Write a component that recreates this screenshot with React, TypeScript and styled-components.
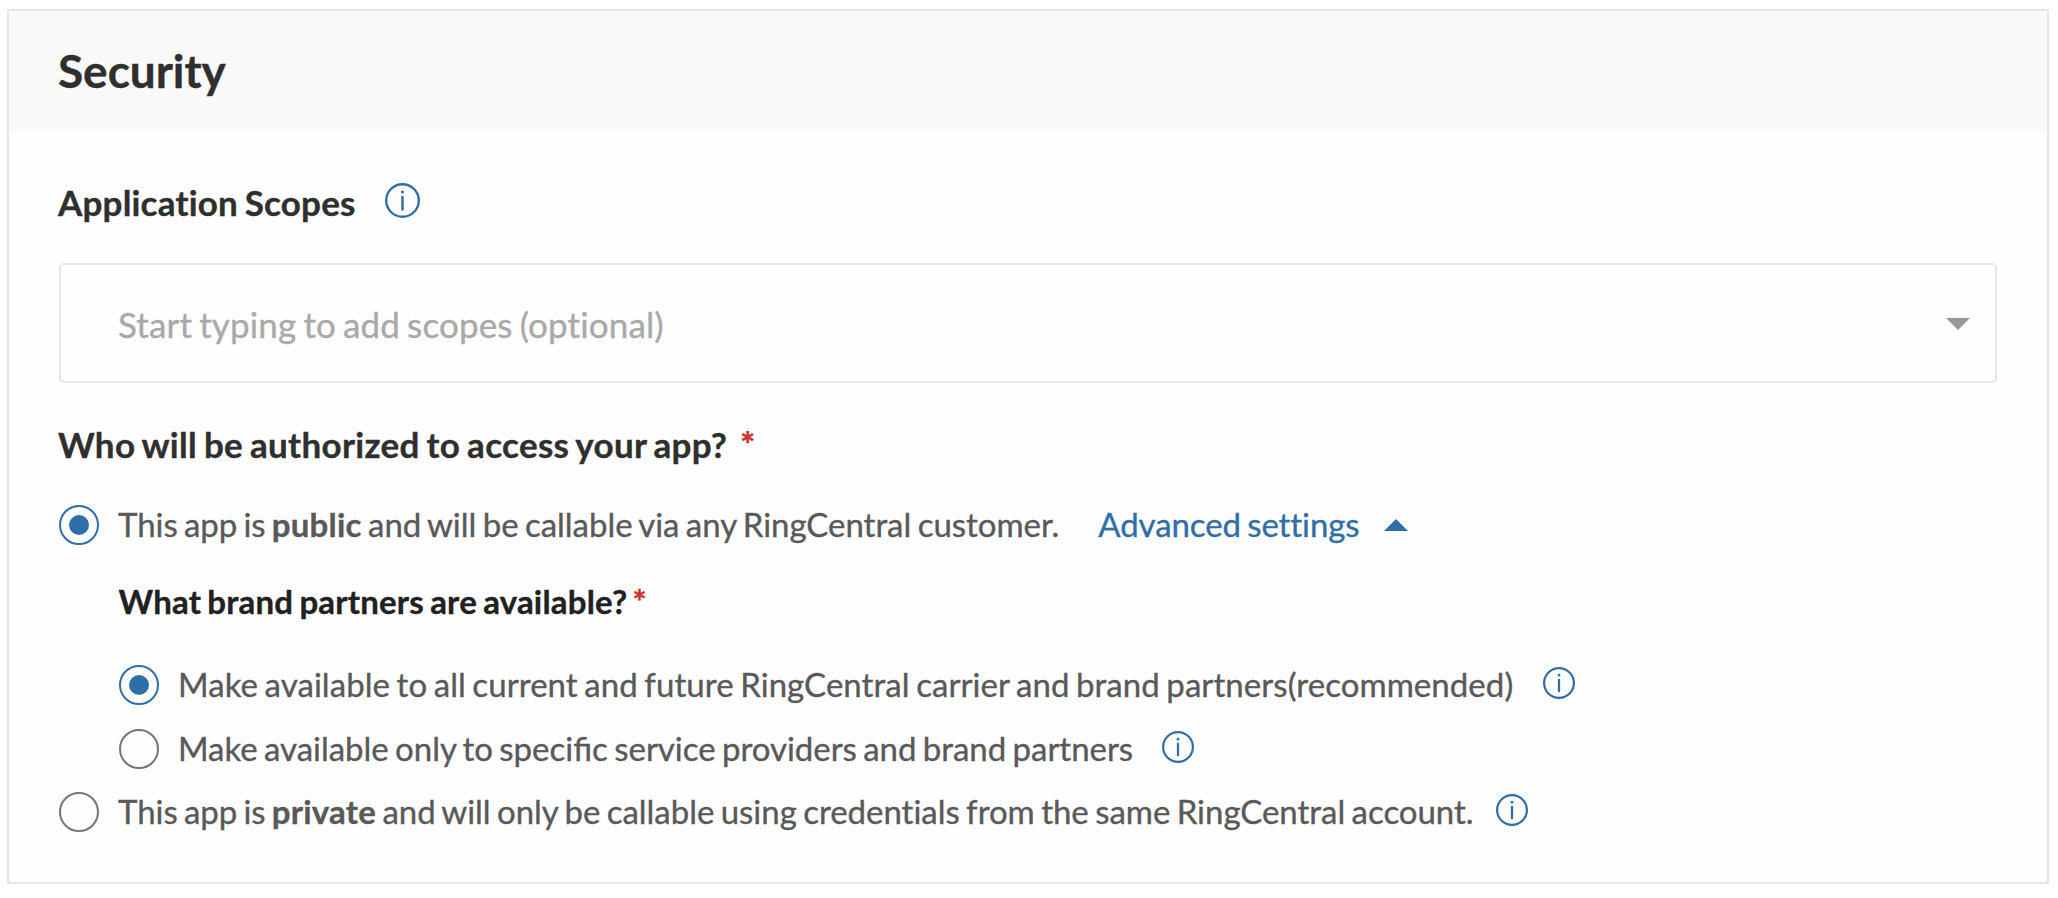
import React, { useState } from "react";
import styled, { createGlobalStyle } from "styled-components";

const blue = "#2f6ea9";
const line = "#e6e6e6";

const GlobalStyle = createGlobalStyle`
  * { box-sizing: border-box; }
  body {
    margin: 0;
    background: #fff;
    font-family: Lato, "Liberation Sans", sans-serif;
    font-variant-ligatures: none;
    -webkit-font-smoothing: antialiased;
    -webkit-text-stroke: 0.35px currentColor;
  }
`;

const Page = styled.main`
  padding: 9px 9px 14px 7px;
`;

const Panel = styled.section`
  height: 875px;
  border: 2px solid ${line};
  background: #fefefe;
`;

const PanelHeader = styled.header`
  height: 120px;
  padding: 0 49px;
  background: #f9f9f9;
`;

const Title = styled.h1`
  margin: 0;
  font-size: 46px;
  font-weight: 700;
  line-height: 119px;
  letter-spacing: -0.05px;
  color: #2f2f2f;
`;

const PanelBody = styled.div`
  display: flex;
  flex-direction: column;
  padding: 41px 50px 0;
`;

const Heading = styled.div<{ $nested?: boolean; $tracking: number }>`
  display: flex;
  align-items: center;
  height: ${(p) => (p.$nested ? "50px" : "60px")};
  margin: 0 0 ${(p) => (p.$nested ? "27px" : "0")} ${(p) => (p.$nested ? "-0.5px" : "-1px")};
  font-size: ${(p) => (p.$nested ? "33px" : "35px")};
  font-weight: 700;
  line-height: ${(p) => (p.$nested ? "50px" : "60px")};
  letter-spacing: ${(p) => p.$tracking}px;
  word-spacing: -2px;
  white-space: pre;
  color: ${(p) => (p.$nested ? "#212121" : "#2f2f2f")};
`;

const Required = styled.span<{ $gap: number }>`
  margin-left: ${(p) => p.$gap}px;
  padding-bottom: 2px;
  font-weight: 900;
  color: #c93430;
`;

const ScopeSelect = styled.div`
  display: flex;
  align-items: center;
  justify-content: space-between;
  height: 120px;
  margin: 31px 0;
  padding: 0 25px 0 57px;
  border: 2px solid ${line};
  border-radius: 5px;
`;

const Placeholder = styled.span`
  padding-top: 1px;
  font-size: 35px;
  line-height: 50px;
  letter-spacing: 0.13px;
  word-spacing: -2px;
  color: #a9a9a9;
`;

const Caret = styled.svg`
  display: block;
  width: 24px;
  height: 12px;
  margin-top: 2px;
`;

const Option = styled.label<{ $gap: number; $height?: number }>`
  display: flex;
  align-items: center;
  gap: ${(p) => p.$gap}px;
  height: ${(p) => p.$height ?? 64}px;
  cursor: pointer;
`;

const OptionRow = styled.div`
  display: flex;
  align-items: center;
`;

const HiddenInput = styled.input`
  position: absolute;
  opacity: 0;
  pointer-events: none;
`;

const RadioMark = styled.span<{ $on: boolean }>`
  display: grid;
  place-items: center;
  width: 40px;
  height: 40px;
  border: 2px solid ${(p) => (p.$on ? blue : "#767676")};
  border-radius: 50%;

  &::after {
    content: "";
    width: 20px;
    height: 20px;
    border-radius: 50%;
    background: ${(p) => (p.$on ? blue : "transparent")};
  }
`;

const OptionText = styled.span<{ $tracking?: number }>`
  padding-bottom: 2px;
  font-size: 33px;
  line-height: 60px;
  letter-spacing: ${(p) => (p.$tracking ? `${p.$tracking}px` : "normal")};
  word-spacing: -2px;
  white-space: pre;
  color: #595959;
`;

const Lead = styled.span`
  word-spacing: -2.2px;
`;

const Strong = styled.b`
  letter-spacing: 0.2px;
`;

const Ligated = styled.span`
  font-variant-ligatures: common-ligatures;
  letter-spacing: normal;
`;

const Nested = styled.div`
  padding-left: 60px;
`;

const AdvancedToggle = styled.button`
  display: flex;
  align-items: center;
  gap: 25px;
  margin: 0 0 0 39px;
  padding: 0 0 2px;
  border: 0;
  background: none;
  font: 400 33px/60px Lato, "Liberation Sans", sans-serif;
  font-variant-ligatures: none;
  letter-spacing: -0.1px;
  word-spacing: -2px;
  color: ${blue};
  cursor: pointer;
`;

const InfoSvg = styled.svg<{ $size: number; $gap: number }>`
  display: block;
  width: ${(p) => p.$size}px;
  height: ${(p) => p.$size}px;
  margin: 0 0 4px ${(p) => p.$gap}px;
`;

function Info({ size = 32, gap }: { size?: number; gap: number }) {
  return (
    <InfoSvg $size={size} $gap={gap} viewBox="0 0 35 35" fill="none" stroke={blue}>
      <circle cx="17.5" cy="17.5" r="16.3" strokeWidth="2.4" />
      <circle cx="17.5" cy="9" r="1.5" fill={blue} stroke="none" />
      <path d="M17.5 14v12.6" strokeWidth="2.5" strokeLinecap="round" />
    </InfoSvg>
  );
}

type RadioProps = {
  name: string;
  checked: boolean;
  onSelect: () => void;
  gap: number;
  height?: number;
  tracking?: number;
  children: React.ReactNode;
};

function Radio({ name, checked, onSelect, gap, height, tracking, children }: RadioProps) {
  return (
    <Option $gap={gap} $height={height}>
      <HiddenInput type="radio" name={name} checked={checked} onChange={onSelect} />
      <RadioMark $on={checked} />
      <OptionText $tracking={tracking}>{children}</OptionText>
    </Option>
  );
}

export default function App() {
  const [access, setAccess] = useState("public");
  const [brands, setBrands] = useState("all");

  return (
    <>
      <GlobalStyle />
      <Page>
        <Panel>
          <PanelHeader>
            <Title>Security</Title>
          </PanelHeader>
          <PanelBody>
            <Heading $tracking={0.2}>
              Application Scopes
              <Info size={35} gap={29} />
            </Heading>
            <ScopeSelect>
              <Placeholder>Start typing to add scopes (optional)</Placeholder>
              <Caret viewBox="0 0 24 12">
                <path d="M0 0h24L12 12z" fill="#999" />
              </Caret>
            </ScopeSelect>
            <Heading $tracking={0.32}>
              Who will be authorized to access your app?
              <Required $gap={13}>*</Required>
            </Heading>
            <OptionRow>
              <Radio name="access" checked={access === "public"} onSelect={() => setAccess("public")} gap={19} height={102} tracking={-0.03}>
                <Lead>This app is </Lead>
                <Strong>public</Strong> and will be callable via any RingCentral customer.
              </Radio>
              <AdvancedToggle type="button">
                Advanced settings
                <Caret viewBox="0 0 24 12">
                  <path d="M12 0l12 12H0z" fill={blue} />
                </Caret>
              </AdvancedToggle>
            </OptionRow>
            <Nested>
              <Heading $nested $tracking={0.19}>
                What brand partners are available?
                <Required $gap={5}>*</Required>
              </Heading>
              <OptionRow>
                <Radio name="brands" checked={brands === "all"} onSelect={() => setBrands("all")} gap={19} tracking={0.065}>
                  Make available to all current and future RingCentral carrier and brand partners(recommended)
                </Radio>
                <Info gap={30} />
              </OptionRow>
              <OptionRow>
                <Radio name="brands" checked={brands === "specific"} onSelect={() => setBrands("specific")} gap={19} tracking={-0.035}>
                  Make available only to <Ligated>specific</Ligated> service providers and brand partners
                </Radio>
                <Info gap={29} />
              </OptionRow>
            </Nested>
            <OptionRow>
              <Radio name="access" checked={access === "private"} onSelect={() => setAccess("private")} gap={19} height={62} tracking={-0.03}>
                <Lead>This app is </Lead>
                <Strong>private</Strong> and will only be callable using credentials from the same RingCentral account.
              </Radio>
              <Info gap={22} />
            </OptionRow>
          </PanelBody>
        </Panel>
      </Page>
    </>
  );
}
